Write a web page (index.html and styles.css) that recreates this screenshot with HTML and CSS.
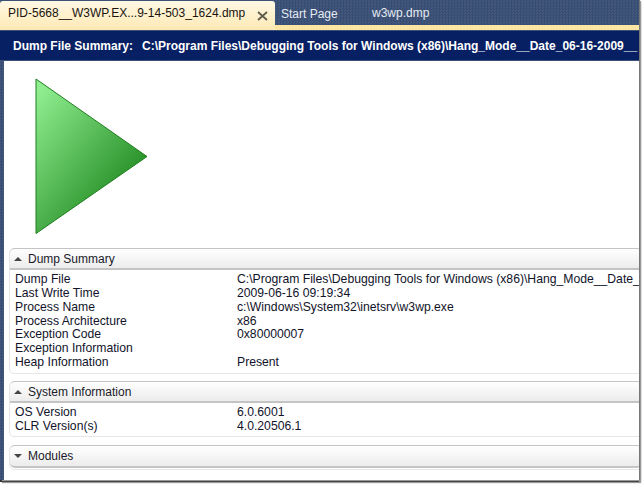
FILE: index.html
```html
<!DOCTYPE html>
<html lang="en">
<head>
<meta charset="utf-8">
<title>Dump File Summary</title>
<link rel="stylesheet" href="styles.css">
</head>
<body>
<div class="window">
  <div class="tabs">
    <div class="tab active">
      <span class="tab-name">PID-5668__W3WP.EX...9-14-503_1624.dmp</span>
      <svg class="close" width="11" height="10" viewBox="0 0 11 10"><path d="M1 1l9 8M10 1l-9 8" stroke="#5f5b4c" stroke-width="1.8" fill="none"/></svg>
    </div>
    <div class="tab start">Start Page</div>
    <div class="tab w3wp">w3wp.dmp</div>
  </div>
  <div class="tab-line"></div>
  <div class="title-bar"><span class="title-label">Dump File Summary:</span><span class="title-path">C:\Program Files\Debugging Tools for Windows (x86)\Hang_Mode__Date_06-16-2009__</span></div>
  <div class="content">
    <div class="arrow-wrap">
      <svg width="114" height="158" viewBox="0 0 114 158">
        <defs><linearGradient id="g" x1="0.05" y1="0.05" x2="0.75" y2="0.85"><stop offset="0" stop-color="#90ee90"/><stop offset="1" stop-color="#228b22"/></linearGradient></defs>
        <polygon points="1,1 112,78.5 1,155.5" fill="url(#g)" stroke="#1f7f1f" stroke-width="1"/>
      </svg>
    </div>
    <section class="panel summary">
      <header class="panel-head"><span class="caret up"></span>Dump Summary</header>
      <div class="rows">
        <div class="row"><span>Dump File</span><span>C:\Program Files\Debugging Tools for Windows (x86)\Hang_Mode__Date_</span></div>
        <div class="row"><span>Last Write Time</span><span>2009-06-16 09:19:34</span></div>
        <div class="row"><span>Process Name</span><span>c:\Windows\System32\inetsrv\w3wp.exe</span></div>
        <div class="row"><span>Process Architecture</span><span>x86</span></div>
        <div class="row"><span>Exception Code</span><span>0x80000007</span></div>
        <div class="row"><span>Exception Information</span><span></span></div>
        <div class="row"><span>Heap Information</span><span>Present</span></div>
      </div>
    </section>
    <section class="panel system">
      <header class="panel-head"><span class="caret up"></span>System Information</header>
      <div class="rows">
        <div class="row"><span>OS Version</span><span>6.0.6001</span></div>
        <div class="row"><span>CLR Version(s)</span><span>4.0.20506.1</span></div>
      </div>
    </section>
    <section class="panel modules">
      <header class="panel-head"><span class="caret down"></span>Modules</header>
    </section>
  </div>
</div>
</body>
</html>
```
FILE: styles.css
```css
html, body { margin: 0; padding: 0; background: #fff; }
body { width: 643px; height: 484px; overflow: hidden; font-family: "Liberation Sans", Arial, sans-serif; }
.window { width: 639px; height: 480px; overflow: hidden; display: flex; flex-direction: column; background-color: #3e5378; background-image: conic-gradient(#384d73 25%, #44587c 0 50%, #384d73 0 75%, #44587c 0); background-size: 3px 3px; box-shadow: 1px 0 0 #777, 2px 1px 1px #999, 0 2px 0 #333, 2px 3px 1px #999; }
.tabs { height: 25px; flex: none; display: flex; align-items: flex-start; padding-top: 1px; box-sizing: border-box; font-size: 12px; color: #e6ebf2; }
.tab { white-space: nowrap; }
.tab.active { width: 275px; height: 29px; box-sizing: border-box; padding: 5px 0 0 8px; flex: none; display: flex; background: linear-gradient(#fff8e4, #fde9b4); border-radius: 3px 3px 0 0; color: #1a1410; position: relative; z-index: 1; }
.tab-name { width: 249px; }
.close { margin-top: 5px; }
.start { padding: 6px 0 0 6px; width: 91px; flex: none; }
.w3wp { padding-top: 5px; }
.tab-line { height: 5px; flex: none; background: #fde6a4; }
.title-bar { height: 29px; flex: none; margin-top: 1px; background: #071f63; color: #fff; font-size: 12px; font-weight: bold; display: flex; align-items: center; padding-left: 13px; white-space: nowrap; overflow: hidden; }
.title-label { width: 129px; flex: none; }
.content { flex: 1; margin: 1px 0 0 4px; background: #fff; overflow: hidden; border-top: 1px solid #fff; }
.arrow-wrap { height: 186px; padding: 16px 0 0 31px; box-sizing: border-box; }
.panel { margin: 0 -4px 0 5px; border: 1px solid #e6e6e6; border-radius: 5px; }
.summary { height: 124px; }
.system { height: 54px; margin-top: 7px; }
.modules { height: 23px; margin-top: 8px; }
.panel-head { height: 22px; box-sizing: border-box; display: flex; align-items: center; padding-left: 4px; font-size: 12px; color: #1a1a2a; background: linear-gradient(#fff, #ececec); border: 1px solid #c4c4c4; border-width: 1px 0 2px; border-radius: 5px 5px 0 0; margin: -1px 0 0; }
.modules .panel-head { height: 23px; border-radius: 5px; }
.caret { width: 0; height: 0; border-left: 4px solid transparent; border-right: 4px solid transparent; margin-right: 6px; }
.caret.up { border-bottom: 4px solid #444; }
.caret.down { border-top: 4px solid #444; }
.rows { padding: 2px 0 0 5px; font-size: 12.2px; color: #11132a; }
.row { display: flex; height: 13.85px; line-height: 14px; white-space: nowrap; }
.row span:first-child { width: 222px; flex: none; }
```
